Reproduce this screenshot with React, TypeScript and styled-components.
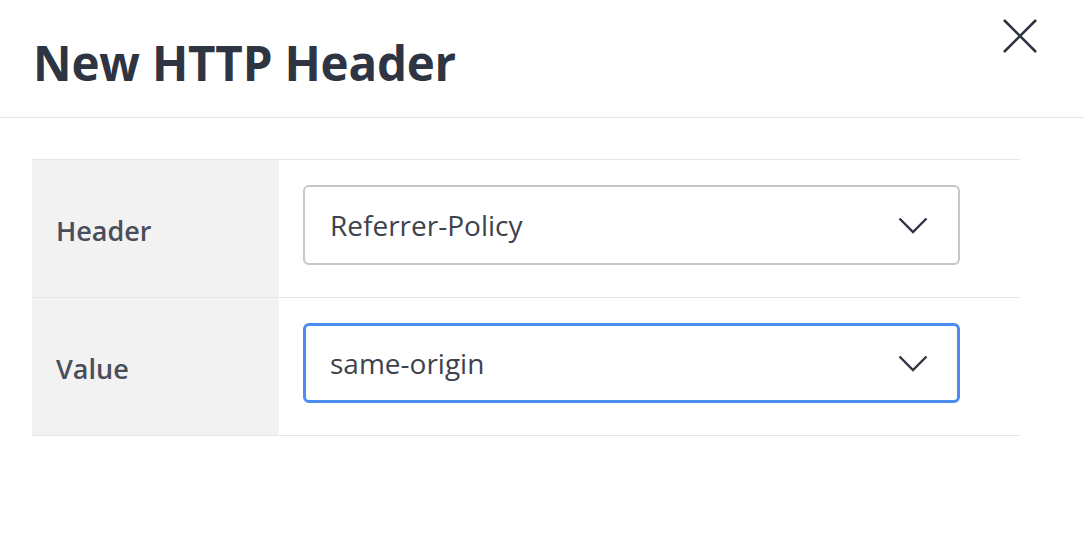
import styled, { createGlobalStyle } from 'styled-components'

const GlobalStyle = createGlobalStyle`
  body {
    margin: 0;
    background: #ffffff;
    font-family: 'Open Sans', 'Noto Sans', sans-serif;
  }
`

const Modal = styled.div`
  width: 1084px;
  height: 546px;
  background: #ffffff;
`

const ModalHeader = styled.header`
  position: relative;
  height: 118px;
  border-bottom: 1px solid #e6e6e6;
  display: flex;
  align-items: center;
  padding-left: 33px;
  box-sizing: border-box;
`

const Title = styled.h1`
  margin: 0;
  font-size: 47.5px;
  font-weight: 700;
  color: #2e3442;
  letter-spacing: -0.2px;
  line-height: 1;
  padding-top: 8px;
`

const CloseButton = styled.button`
  position: absolute;
  top: 17px;
  right: 45px;
  width: 38px;
  height: 38px;
  padding: 0;
  border: none;
  background: transparent;
  cursor: pointer;
  display: flex;
  align-items: center;
  justify-content: center;
`

const Body = styled.div`
  padding: 41px 64px 0 32px;
`

const Table = styled.div`
  border-top: 1px solid #e6e6e6;
`

const Row = styled.div`
  display: flex;
  border-bottom: 1px solid #e6e6e6;
`

const Label = styled.div`
  width: 247px;
  background: #f2f2f2;
  display: flex;
  align-items: center;
  padding-left: 24px;
  padding-top: 4px;
  box-sizing: border-box;
  font-size: 27px;
  font-weight: 600;
  color: #4a4e58;
`

const Cell = styled.div`
  flex: 1;
  padding: 25px 60px 32px 24px;
`

const Select = styled.div<{ $focused?: boolean }>`
  height: 80px;
  box-sizing: border-box;
  border: ${(p) => (p.$focused ? '3px solid #4a8cf0' : '2px solid #c6c6cb')};
  border-radius: 6px;
  display: flex;
  align-items: center;
  justify-content: space-between;
  padding: 0 ${(p) => (p.$focused ? '29px' : '30px')} 0 ${(p) => (p.$focused ? '24px' : '25px')};
  font-size: 28px;
  color: #3e424c;
  background: #ffffff;
`

const Chevron = () => (
  <svg width="30" height="17" viewBox="0 0 30 17" fill="none">
    <path d="M1.5 1.5 L15 15 L28.5 1.5" stroke="#2e3442" strokeWidth="2.4" />
  </svg>
)

const fields = [
  { label: 'Header', value: 'Referrer-Policy', focused: false },
  { label: 'Value', value: 'same-origin', focused: true },
]

export default function App() {
  return (
    <Modal>
      <GlobalStyle />
      <ModalHeader>
        <Title>New HTTP Header</Title>
        <CloseButton aria-label="Close">
          <svg width="36" height="36" viewBox="0 0 36 36" fill="none">
            <path d="M2 2 L34 34 M34 2 L2 34" stroke="#2e3442" strokeWidth="2.6" />
          </svg>
        </CloseButton>
      </ModalHeader>
      <Body>
        <Table>
          {fields.map((f) => (
            <Row key={f.label}>
              <Label>{f.label}</Label>
              <Cell>
                <Select $focused={f.focused}>
                  <span>{f.value}</span>
                  <Chevron />
                </Select>
              </Cell>
            </Row>
          ))}
        </Table>
      </Body>
    </Modal>
  )
}
